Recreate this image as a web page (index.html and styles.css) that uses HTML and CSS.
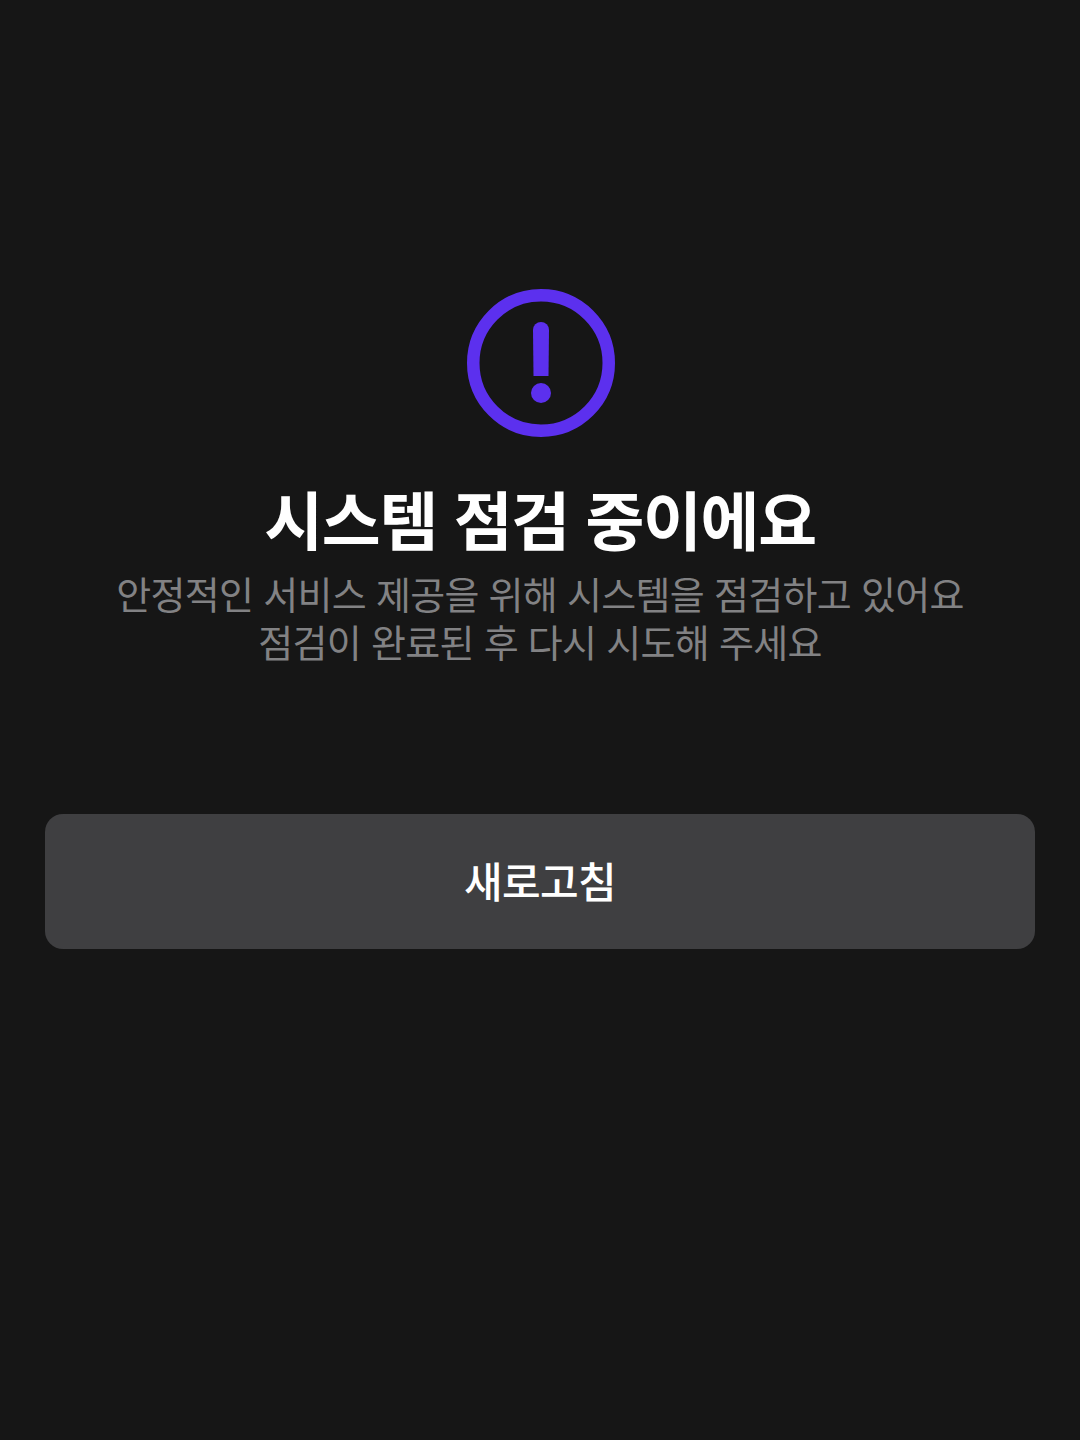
FILE: index.html
```html
<!DOCTYPE html>
<html lang="ko">
<head>
    <meta charset="UTF-8">
    <title>시스템 점검</title>
    <link rel="stylesheet" href="styles.css">
</head>
<body>
    <div class="container">
        <svg class="alert-icon" width="150" height="148" viewBox="0 0 150 148">
            <circle cx="76" cy="74" r="67.75" fill="none" stroke="#5c30ee" stroke-width="12.5"/>
            <path d="M68 41a8 8 0 0 1 16 0l-.5 46h-15z" fill="#5c30ee"/>
            <circle cx="76" cy="104" r="10" fill="#5c30ee"/>
        </svg>
        <h1>시스템 점검 중이에요</h1>
        <p class="message">안정적인 서비스 제공을 위해 시스템을 점검하고 있어요<br>점검이 완료된 후 다시 시도해 주세요</p>
        <button class="refresh">새로고침</button>
    </div>
</body>
</html>
```

FILE: styles.css
```css
body {
    margin: 0;
    min-height: 1440px;
    background: #161616;
    font-family: "Noto Sans CJK KR", "Noto Sans", sans-serif;
}

.container {
    display: flex;
    flex-direction: column;
    align-items: center;
    padding: 289px 45px 0;
}

.alert-icon {
    display: block;
}

h1 {
    margin: 40px 0 0;
    color: #fff;
    font-size: 64px;
    font-weight: 700;
    line-height: 80px;
    letter-spacing: -1.3px;
}

.message {
    margin: 12px 0 0;
    color: #828284;
    font-size: 38px;
    font-weight: 400;
    line-height: 48px;
    text-align: center;
    letter-spacing: -0.7px;
}

.refresh {
    width: 100%;
    height: 135px;
    margin-top: 149px;
    padding: 0 0 4px;
    border: none;
    border-radius: 18px;
    background: #3f3f41;
    color: #fff;
    font-family: inherit;
    font-size: 42px;
    font-weight: 500;
    letter-spacing: -0.7px;
}
```
